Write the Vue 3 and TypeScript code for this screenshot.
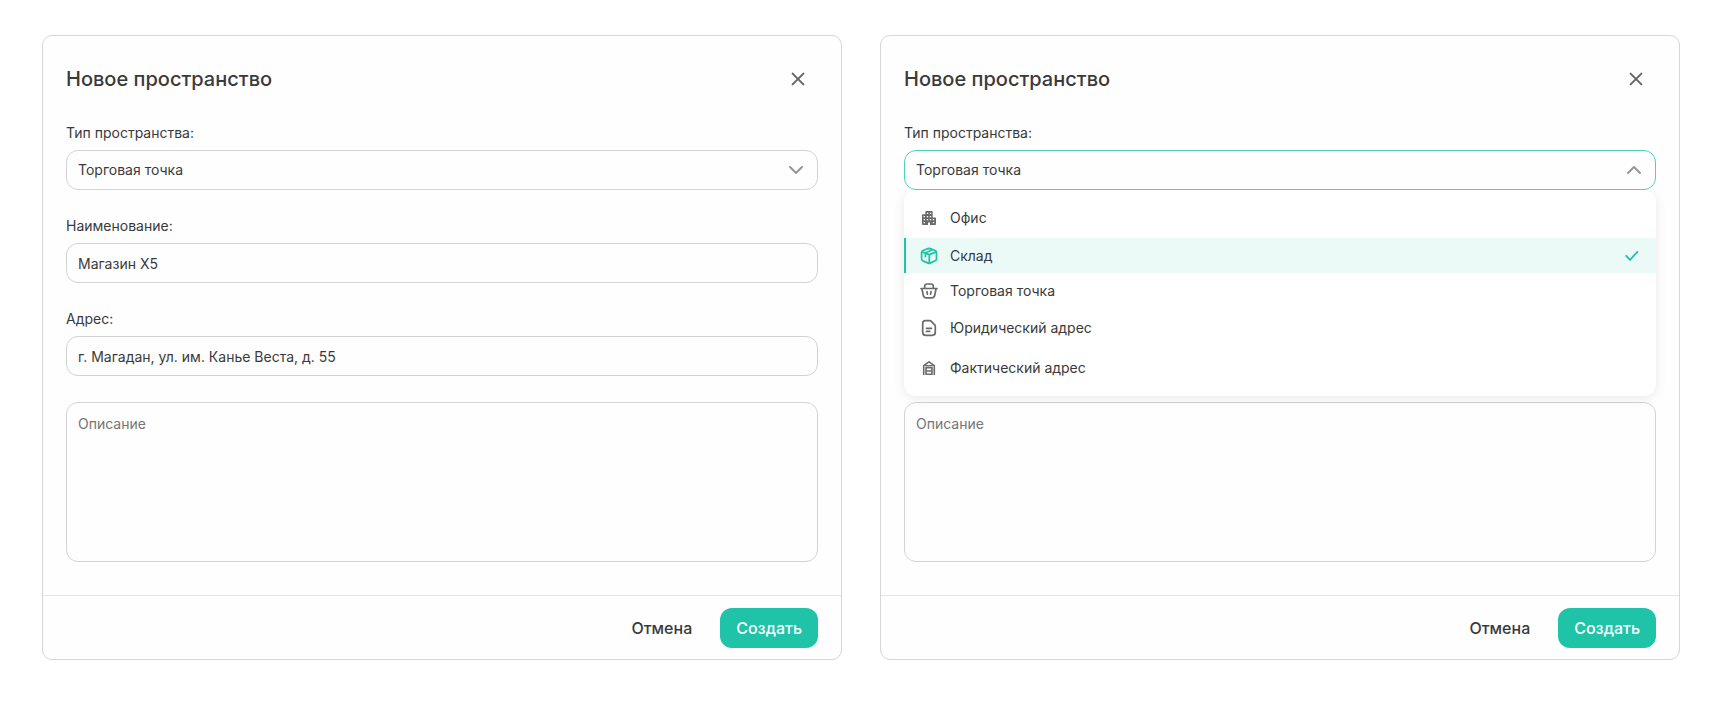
<script setup lang="ts">
import { reactive } from 'vue'

type IconName = 'office' | 'box' | 'basket' | 'document' | 'warehouse'

interface SpaceType {
  id: string
  label: string
  icon: IconName
  compact: boolean
}

interface SpaceForm {
  id: string
  open: boolean
  type: string
  highlighted: string
  name: string
  address: string
  description: string
}

const spaceTypes: SpaceType[] = [
  { id: 'office', label: 'Офис', icon: 'office', compact: false },
  { id: 'storage', label: 'Склад', icon: 'box', compact: true },
  { id: 'shop', label: 'Торговая точка', icon: 'basket', compact: true },
  { id: 'legal', label: 'Юридический адрес', icon: 'document', compact: false },
  { id: 'actual', label: 'Фактический адрес', icon: 'warehouse', compact: false },
]

const forms = reactive<SpaceForm[]>([
  {
    id: 'first',
    open: false,
    type: 'shop',
    highlighted: 'storage',
    name: 'Магазин X5',
    address: 'г. Магадан, ул. им. Канье Веста, д. 55',
    description: '',
  },
  {
    id: 'second',
    open: true,
    type: 'shop',
    highlighted: 'storage',
    name: 'Магазин X5',
    address: 'г. Магадан, ул. им. Канье Веста, д. 55',
    description: '',
  },
])

function choose(form: SpaceForm, id: string) {
  form.type = id
  form.highlighted = id
  form.open = false
}
</script>

<template>
  <main class="page">
    <form v-for="form in forms" :key="form.id" class="card" @submit.prevent>
      <header class="header">
        <h2 class="title">Новое пространство</h2>
        <button type="button" class="close" aria-label="Закрыть">
          <svg width="14" height="14" viewBox="0 0 14 14" fill="none">
            <path d="M1.6 1.6l10.800 10.800M12.400 1.600l-10.800 10.800" stroke="#666666" stroke-width="2" stroke-linecap="round" />
          </svg>
        </button>
      </header>

      <div class="fields">
        <div class="field">
          <label class="label" :for="form.id + '-type'">Тип пространства:</label>
          <div class="picker">
            <select :id="form.id + '-type'" v-model="form.type" class="control select" :class="{ active: form.open }">
              <option v-for="item in spaceTypes" :key="item.id" :value="item.id">{{ item.label }}</option>
            </select>
            <svg class="chevron" :class="{ up: form.open }" width="16" height="16" viewBox="0 0 16 16" fill="none">
              <path d="M2 5l6 6 6-6" stroke="#969696" stroke-width="2" stroke-linecap="round" stroke-linejoin="round" />
            </svg>

            <div v-if="form.open" class="menu" role="listbox" aria-label="Тип пространства">
              <button
                v-for="item in spaceTypes"
                :key="item.id"
                type="button"
                role="option"
                class="option"
                :class="{ compact: item.compact, selected: item.id === form.highlighted }"
                :aria-selected="item.id === form.highlighted"
                @click="choose(form, item.id)"
              >
                <svg class="icon" width="20" height="20" viewBox="0 0 20 20" fill="none" stroke="currentColor" stroke-linecap="round" stroke-linejoin="round">
                  <template v-if="item.icon === 'office'">
                    <path
                      fill="currentColor"
                      stroke="none"
                      fill-rule="evenodd"
                      d="M3 7.200q0-.9.9-.9H6.300V3.900q0-.9.9-.9h5.600q.9 0 .9.900v5.500h2.400q.9 0 .9.900v5.800q0 .9-.9.900H11v-2.600H9V17H3.900q-.9 0-.9-.9zM4.600 7.900h1.400v1.400H4.600zM4.600 10.900h1.400v1.400H4.600zM4.600 13.900h1.400v1.400H4.600zM7.800 4.700h1.400v1.400H7.800zM10.800 4.700h1.400v1.400h-1.400zM7.800 7.900h1.400v1.400H7.800zM10.800 7.900h1.400v1.400h-1.400zM7.800 10.900h1.400v1.400H7.800zM10.800 10.900h1.400v1.400h-1.400zM13.800 10.900h1.400v1.400h-1.400zM13.800 13.900h1.400v1.400h-1.400z"
                    />
                  </template>
                  <template v-else-if="item.icon === 'box'">
                    <path
                      stroke-width="1.8"
                      d="M9 2.700L4 4.500Q2.600 5 2.600 6.500v6.300q0 1.400 1.300 2l5.300 2.300q1 .4 2 0l5-2.300q1.300-.6 1.300-2V6.500q0-1.500-1.400-2l-4.800-1.800q-1.100-.4-2.300 0zM3 5.900l7.300 2.700 6.800-2.700M10.300 8.600v8.600M13.300 3.700L6.400 7v3.400"
                    />
                  </template>
                  <template v-else-if="item.icon === 'basket'">
                    <path
                      stroke-width="1.7"
                      d="M2 7.500h16M2.900 7.500l1.300 6.700q.5 2.700 3 2.700h5.600q2.500 0 3-2.700l1.300-6.700M5.700 7.300V5.300q0-2.300 2.300-2.300h4q2.300 0 2.300 2.300v2M8 10.500l.4 2.700M12 10.500l-.4 2.700"
                    />
                  </template>
                  <template v-else-if="item.icon === 'document'">
                    <path
                      stroke-width="1.7"
                      d="M3.700 5.400q0-2.700 2.700-2.700h4.500q.8 0 1.400.6l3.400 3.500q.6.600.6 1.400v6.100q0 3-3 3H6.700q-3 0-3-3zM7.500 10.300h5M7.500 13.400h3.200"
                    />
                  </template>
                  <template v-else>
                    <path stroke-width="1.600" d="M4.700 16.500V7.700L10 3.800l5.300 3.900v8.800M7 16.300V9.600h6v6.700zM7 13h6" />
                    <path stroke-width="1.200" d="M6.500 7.600h7" />
                  </template>
                </svg>
                <span class="option-text">{{ item.label }}</span>
                <svg v-if="item.id === form.highlighted" width="16" height="16" viewBox="0 0 16 16" fill="none">
                  <path d="M2.200 7.800l3.800 4 7.400-8" stroke="#1fc3a8" stroke-width="1.8" stroke-linecap="round" stroke-linejoin="round" />
                </svg>
              </button>
            </div>
          </div>
        </div>

        <div class="field" :class="{ covered: form.open }">
          <label class="label" :for="form.id + '-name'">Наименование:</label>
          <input :id="form.id + '-name'" v-model="form.name" class="control" type="text" />
        </div>

        <div class="field" :class="{ covered: form.open }">
          <label class="label" :for="form.id + '-address'">Адрес:</label>
          <input :id="form.id + '-address'" v-model="form.address" class="control" type="text" />
        </div>

        <textarea v-model="form.description" class="control description" placeholder="Описание" aria-label="Описание"></textarea>
      </div>

      <footer class="footer">
        <button type="button" class="button">Отмена</button>
        <button type="submit" class="button primary">Создать</button>
      </footer>
    </form>
  </main>
</template>

<style>
body {
  margin: 0;
  background: #ffffff;
}
</style>

<style scoped>
.page,
.page * {
  box-sizing: border-box;
}

.page {
  display: grid;
  grid-template-columns: repeat(2, minmax(0, 1fr));
  align-items: start;
  gap: 38px;
  padding: 35px 41px 35px 42px;
  font-family: Inter, "Liberation Sans", sans-serif;
  font-size: 14px;
  line-height: 20px;
  color: #3a3a3a;
}

.card {
  border: 1px solid #d6d6d6;
  border-radius: 10px;
  background: #fefefe;
}

.header {
  display: flex;
  align-items: center;
  justify-content: space-between;
  padding: 23px 23px 24px;
}

.title {
  margin: 0;
  font-size: 20px;
  font-weight: 500;
  line-height: 28px;
  color: #3a3a3a;
}

.close {
  display: flex;
  align-items: center;
  justify-content: center;
  width: 40px;
  height: 40px;
  padding: 0;
  border: 0;
  background: none;
  cursor: pointer;
}

.fields {
  display: flex;
  flex-direction: column;
  gap: 26px;
  padding: 0 23px 33px;
}

.field {
  display: flex;
  flex-direction: column;
  gap: 7px;
}

/* Fields that lie under the open list */
.covered {
  visibility: hidden;
}

.control {
  display: block;
  width: 100%;
  height: 40px;
  margin: 0;
  padding: 0 11px;
  border: 1px solid #d3d3d3;
  border-radius: 12px;
  outline: none;
  background: transparent;
  font: inherit;
  color: inherit;
}

.select {
  appearance: none;
  cursor: pointer;
}

.control.active {
  border-color: #4fd0ba;
}

.description {
  height: 160px;
  padding: 11px;
  resize: none;
}

.description::placeholder {
  color: #757575;
  opacity: 1;
}

.picker {
  position: relative;
}

.chevron {
  position: absolute;
  top: 12px;
  right: 14px;
  pointer-events: none;
}

.chevron.up {
  transform: rotate(180deg);
}

.menu {
  position: absolute;
  z-index: 1;
  top: 100%;
  left: 0;
  right: 0;
  padding: 8px 0;
  border-radius: 12px;
  background: #ffffff;
  box-shadow: 0 2px 12px rgba(0, 0, 0, 0.09);
  clip-path: inset(0 -20px -20px -20px);
}

.option {
  display: flex;
  align-items: center;
  gap: 11px;
  width: 100%;
  height: 40px;
  padding: 0 16px 0 13px;
  border: 0;
  border-left: 2px solid transparent;
  background: none;
  font: inherit;
  color: inherit;
  text-align: left;
  cursor: pointer;
}

.option.compact {
  height: 35px;
}

.option.selected {
  border-left-color: #1fc3a8;
  background: #ebfaf7;
}

.icon {
  flex: none;
  color: #6a6a6a;
}

.selected .icon {
  color: #1fc3a8;
}

.option-text {
  flex: 1;
}

.footer {
  display: flex;
  justify-content: flex-end;
  gap: 12px;
  padding: 12px 23px 11px;
  border-top: 1px solid #e6e6e6;
}

.button {
  height: 40px;
  padding: 0 16px;
  border: 0;
  border-radius: 12px;
  background: none;
  font: inherit;
  font-size: 16px;
  font-weight: 500;
  color: #3a3a3a;
  cursor: pointer;
}

.primary {
  background: #1fc3a8;
  color: #ffffff;
}
</style>
